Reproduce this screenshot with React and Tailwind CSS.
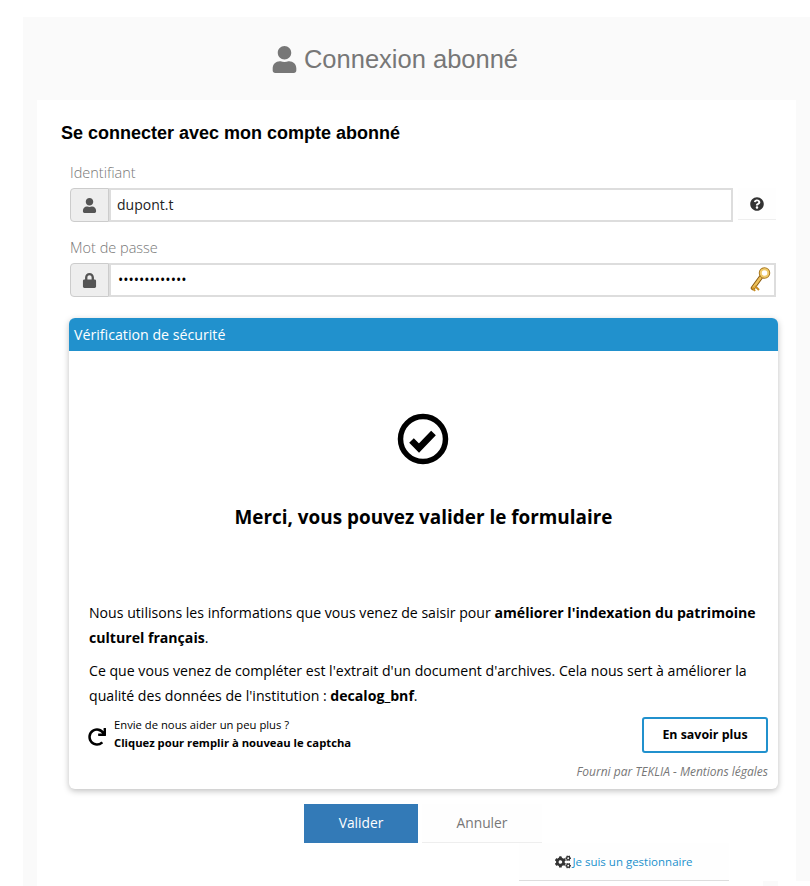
import React from "react";
import { FaUser, FaLock, FaQuestionCircle, FaCogs, FaRedo } from "react-icons/fa";

const openSans = "font-['Open_Sans',sans-serif]";

const KeyIcon = () => (
  <svg width="21" height="25" viewBox="0 0 21 25" className="absolute top-[2px] right-[3px]">
    <path d="M3 21 L11 10" stroke="#8a5a10" strokeWidth="4.5" strokeLinecap="round" />
    <path d="M3 21 L11 10" stroke="#eec25c" strokeWidth="2.5" strokeLinecap="round" />
    <path d="M5 19 L9 23 M2.500 20.500 L5 24" stroke="#c98f24" strokeWidth="2" />
    <circle cx="14.500" cy="6" r="5" fill="none" stroke="#a8761c" strokeWidth="1.500" />
    <circle cx="14.500" cy="6" r="3.800" fill="none" stroke="#f0cb6b" strokeWidth="2" />
  </svg>
);

const CheckIcon = () => (
  <svg width="52" height="52" viewBox="0 0 52 52" fill="none" stroke="#000000">
    <circle cx="26" cy="26" r="22.500" strokeWidth="5.500" />
    <path d="M14.500 27.500 L22 35 L36.500 20" strokeWidth="6.500" />
  </svg>
);

const Field = ({ label, children, labelClass }) => (
  <div>
    <div className={`text-[14.5px] leading-5 font-light text-[#777777] ${labelClass}`}>{label}</div>
    {children}
  </div>
);

const Addon = ({ children }) => (
  <div className="flex h-[34px] w-[39px] shrink-0 items-center justify-center rounded-l-[4px] border border-[#cccccc] bg-[#eeeeee] text-[15px] text-[#555555]">
    {children}
  </div>
);

export default function App() {
  return (
    <div className={`h-[886px] overflow-hidden bg-white pt-[17px] pl-[23px] ${openSans}`}>
      <div className="h-[869px] bg-[#fafafa] pl-[14px]">
        <h1 className="flex h-[83px] items-center justify-center gap-[6px] pt-[1px] pr-[58px] font-['Liberation_Sans',sans-serif] text-[25.500px] text-[#777777]">
          <FaUser size={27} />
          <span>Connexion abonné</span>
        </h1>

        <div className="mr-[14px] h-[781px] bg-white pl-[24px]">
          <h2 className="pt-[23px] font-['Liberation_Sans',sans-serif] text-lg leading-[20px] font-bold text-black">
            Se connecter avec mon compte abonné
          </h2>

          <div className="mt-[20px] pl-[9px]">
            <Field label="Identifiant">
              <div className="mt-[5px] flex">
                <Addon><FaUser /></Addon>
                <div className="flex h-[34px] w-[624px] items-center border-2 border-[#dddddd] pl-[6px] text-sm text-[#222222]">dupont.t</div>
                <div className="ml-[5px] flex h-[32px] w-[38px] items-center justify-center border-b border-[#eeeeee] bg-[#fefefe] text-[#333333]">
                  <FaQuestionCircle size={14} />
                </div>
              </div>
            </Field>

            <Field label="Mot de passe" labelClass="mt-[16px]">
              <div className="mt-[5px] flex">
                <Addon><FaLock /></Addon>
                <div className="relative flex h-[34px] w-[667px] items-center border-2 border-[#dddddd] pl-[7px] text-sm text-black">
                  •••••••••••••
                  <KeyIcon />
                </div>
              </div>
            </Field>

            <div className="mt-[21px] ml-[-1px] w-[709px] rounded-[6px] bg-white shadow-[0_2px_6px_rgba(0,0,0,0.25)]">
              <div className="flex h-[33px] items-center rounded-t-[6px] bg-[#2191cd] pl-[5px] text-[14.200px] text-white">
                Vérification de sécurité
              </div>
              <div className="flex justify-center pt-[62px] pr-[2px]">
                <CheckIcon />
              </div>
              <div className="mt-[38px] text-center text-[18.900px] leading-[28px] font-bold text-black">
                Merci, vous pouvez valider le formulaire
              </div>
              <div className="mt-[69px] px-[20px] text-[14.120px] leading-[25px] text-black">
                <p>
                  Nous utilisons les informations que vous venez de saisir pour{" "}
                  <b>améliorer l'indexation du patrimoine culturel français</b>.
                </p>
                <p className="mt-[8px]">
                  Ce que vous venez de compléter est l'extrait d'un document d'archives. Cela nous sert à améliorer la qualité des données de l'institution : <b>decalog_bnf</b>.
                </p>
              </div>
              <div className="mt-[9px] flex items-center pr-[10px] pl-[19px]">
                <FaRedo size={18} className="mt-[4px] text-black" />
                <div className="mt-[-2px] ml-[8px] text-[11.250px] leading-[18px] text-black">
                  <div>Envie de nous aider un peu plus ?</div>
                  <div className="font-bold">Cliquez pour remplir à nouveau le captcha</div>
                </div>
                <button className="ml-auto h-[36px] w-[126px] rounded-[3px] border-2 border-[#2191cd] text-[12.400px] font-bold text-black">
                  En savoir plus
                </button>
              </div>
              <div className="pt-[11px] pr-[10px] pb-[10px] text-right text-xs leading-[15px] text-[#777777] italic">
                Fourni par TEKLIA - Mentions légales
              </div>
            </div>

            <div className="mt-[15px] ml-[234px] flex text-[13.800px]">
              <button className="h-[39px] w-[114px] bg-[#337ab7] text-white">Valider</button>
              <button className="ml-[4px] h-[39px] w-[120px] border-b border-[#eeeeee] bg-[#fefefe] text-[#777777]">Annuler</button>
            </div>
            <div className="ml-[449px] flex h-[38px] w-[210px] items-center justify-center gap-[1px] border-b border-[#dddddd] bg-[#fefefe] text-[11.500px] text-[#2191cd]">
              <FaCogs size={16} className="text-[#333333]" />
              <span>Je suis un gestionnaire</span>
            </div>
          </div>
        </div>

        <div className="flex h-[5px] justify-end bg-white pr-[32px]">
          <div className="w-[15px] bg-[#fafafa]" />
        </div>
      </div>
    </div>
  );
}
